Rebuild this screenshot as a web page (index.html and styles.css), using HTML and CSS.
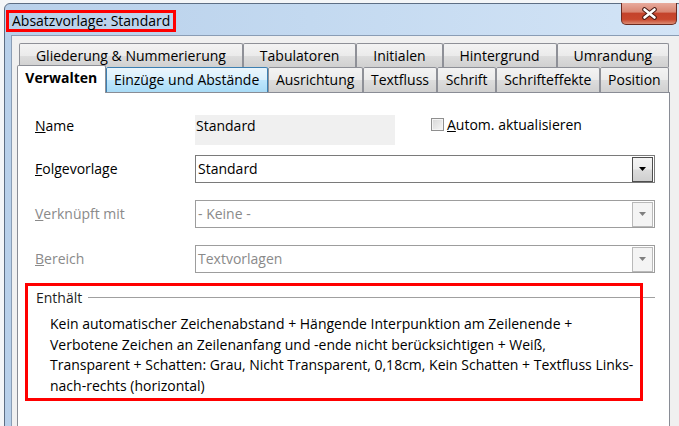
FILE: index.html
```html
<!DOCTYPE html>
<html lang="de">
<head>
<meta charset="utf-8">
<title>Absatzvorlage: Standard</title>
<link rel="stylesheet" href="styles.css">
</head>
<body>
<div class="window">
  <div class="titlebar">
    <div class="title">Absatzvorlage: Standard</div>
    <div class="close">
      <svg width="17" height="13" viewBox="0 0 17 13"><path d="M3.5 2.5 L13.5 10.5 M13.5 2.5 L3.5 10.5" stroke="#4a1a12" stroke-width="4.6" stroke-linecap="round" fill="none"/><path d="M3.5 2.5 L13.5 10.5 M13.5 2.5 L3.5 10.5" stroke="#ffffff" stroke-width="2.6" stroke-linecap="round" fill="none"/></svg>
    </div>
  </div>
  <div class="client">
    <div class="tabs">
      <div class="tabrow back">
        <div class="tab">Gliederung &amp; Nummerierung</div>
        <div class="tab">Tabulatoren</div>
        <div class="tab">Initialen</div>
        <div class="tab">Hintergrund</div>
        <div class="tab">Umrandung</div>
      </div>
      <div class="tabrow front">
        <div class="tab selected">Verwalten</div>
        <div class="tab hover">Einzüge und Abstände</div>
        <div class="tab">Ausrichtung</div>
        <div class="tab">Textfluss</div>
        <div class="tab">Schrift</div>
        <div class="tab">Schrifteffekte</div>
        <div class="tab">Position</div>
      </div>
      <div class="page">
        <div class="row-name">
          <div class="label"><u>N</u>ame</div>
          <div class="namebox">Standard</div>
          <div class="check"><span class="box"></span><span><u>A</u>utom. aktualisieren</span></div>
        </div>
        <div class="row-combo first">
          <div class="label"><u>F</u>olgevorlage</div>
          <div class="combo">
            <span class="val">Standard</span>
            <span class="btn"><svg width="7" height="4" viewBox="0 0 7 4"><path d="M0 0 H7 L3.5 4 Z" fill="#000"/></svg></span>
          </div>
        </div>
        <div class="row-combo disabled">
          <div class="label"><u>V</u>erknüpft mit</div>
          <div class="combo">
            <span class="val">- Keine -</span>
            <span class="btn"><svg width="7" height="4" viewBox="0 0 7 4"><path d="M0 0 H7 L3.5 4 Z" fill="#7f7f7f"/></svg></span>
          </div>
        </div>
        <div class="row-combo disabled">
          <div class="label"><u>B</u>ereich</div>
          <div class="combo">
            <span class="val">Textvorlagen</span>
            <span class="btn"><svg width="7" height="4" viewBox="0 0 7 4"><path d="M0 0 H7 L3.5 4 Z" fill="#7f7f7f"/></svg></span>
          </div>
        </div>
        <div class="section">
          <div class="sec-head"><span class="sec-title">Enthält</span><span class="sec-line"></span></div>
          <p class="sec-text">Kein automatischer Zeichenabstand + Hängende Interpunktion am Zeilenende +<br>Verbotene Zeichen an Zeilenanfang und -ende nicht berücksichtigen + Weiß,<br>Transparent + Schatten: Grau, Nicht Transparent, 0,18cm, Kein Schatten + Textfluss Links-<br>nach-rechts (horizontal)</p>
          <div class="redbox"></div>
        </div>
      </div>
    </div>
  </div>
</div>
</body>
</html>
```

FILE: styles.css
```css
* { box-sizing: border-box; }
html, body { margin: 0; padding: 0; }
body {
  width: 679px;
  height: 426px;
  overflow: hidden;
  background: #f4f6f8;
  font-family: "Open Sans", "Noto Sans", sans-serif;
  font-size: 14px;
  color: #000;
}
.window {
  margin: 3px 0 0 4px;
  width: 680px;
  height: 440px;
  border: 1px solid #5d6e84;
  border-radius: 6px 6px 0 0;
  background: linear-gradient(to right, #b8d0ea 0%, #c3d9f0 45%, #d3e4f6 100%);
  display: flex;
  flex-direction: column;
}
.titlebar {
  height: 31px;
  flex: none;
  display: flex;
  align-items: flex-start;
}
.title {
  margin: 6px 0 0 1px;
  height: 22px;
  border: 3px solid #f00;
  padding: 0 3px;
  line-height: 16px;
  font-size: 14px;
  color: #000;
  white-space: nowrap;
}
.close {
  margin: -1px 6px 0 auto;
  width: 56px;
  height: 22px;
  border: 1px solid #6b2b20;
  border-top: none;
  border-radius: 0 0 5px 5px;
  background: linear-gradient(#e8ab9d 0%, #d98672 42%, #c4432b 50%, #c8472d 78%, #dc8c74 100%);
  display: flex;
  align-items: center;
  justify-content: center;
}
.client {
  margin-left: 6px;
  flex: 1;
  border-left: 1px solid #8a9db5;
  border-top: 1px solid #8a9db5;
  background: #f0f0f0;
  padding: 7px 0 0 5px;
}
.tabs { width: 653px; }
.tabrow { display: flex; }
.tabrow.back { margin: 0 1px 0 2px; height: 24px; }
.tabrow.front { margin-right: 1px; height: 25px; align-items: flex-end; }
.tab {
  flex: 1 1 auto;
  height: 100%;
  padding: 0 4px;
  border: 1px solid #8e9097;
  border-bottom: none;
  border-radius: 2px 2px 0 0;
  background: linear-gradient(#f3f3f3 0%, #ebebeb 50%, #dddddd 51%, #d0d0d0 100%);
  text-align: center;
  white-space: nowrap;
  line-height: 23px;
}
.front .tab { line-height: 24px; }
.tab.hover {
  background: linear-gradient(#eaf6fd 0%, #d9f0fc 50%, #bee6fd 51%, #a9dbf6 100%);
  border-color: #3c7fb1;
}
.tab.selected {
  position: relative;
  z-index: 1;
  height: 28px;
  margin-bottom: -1px;
  background: #fff;
  font-weight: bold;
}
.page {
  width: 653px;
  height: 345px;
  background: #fff;
  border: 1px solid #898c95;
  padding: 22px 14px 0 17px;
}
.label { width: 160px; flex: none; line-height: 20px; white-space: nowrap; }
.row-name { display: flex; align-items: flex-start; height: 30px; }
.row-name .label { padding-top: 1px; }
.namebox {
  width: 200px;
  height: 30px;
  flex: none;
  background: #f0f0f0;
  padding: 1px 0 0 1px;
  line-height: 20px;
}
.check {
  margin: -1px 0 0 36px;
  height: 20px;
  display: flex;
  align-items: center;
  gap: 3px;
  white-space: nowrap;
}
.box {
  width: 13px;
  height: 13px;
  border: 1px solid #8f8f8f;
  background: linear-gradient(135deg, #d6d6d6, #f6f6f6);
  box-shadow: inset 0 0 0 1px #f4f4f4;
}
.row-combo { display: flex; align-items: center; height: 28px; margin-top: 17px; }
.row-combo.first { margin-top: 10px; }
.combo {
  width: 460px;
  height: 28px;
  flex: none;
  border: 1px solid #7a7a7a;
  display: flex;
  align-items: center;
  padding-left: 2px;
}
.combo .val { flex: 1; line-height: 20px; }
.combo .btn {
  width: 21px;
  height: 25px;
  margin-right: 1px;
  border: 1px solid #4e4e4e;
  background: linear-gradient(#f4f4f4 0%, #ececec 48%, #dcdcdc 52%, #cfcfcf 100%);
  display: flex;
  align-items: center;
  justify-content: center;
}
.disabled { color: #8a8a8a; }
.disabled .combo { border-color: #9d9d9d; }
.disabled .combo .btn { border-color: #b9b9b9; background: #f4f4f4; }
.section { position: relative; margin-top: 15px; }
.sec-head { display: flex; align-items: center; height: 20px; }
.sec-title { padding-left: 1px; line-height: 20px; color: #1e1e1e; }
.sec-line { flex: 1; margin: -2px 0 0 6px; border-top: 1px solid #a0a0a0; }
.sec-text {
  margin: 6px 0 0 15px;
  line-height: 20.7px;
  white-space: nowrap;
}
.redbox {
  position: absolute;
  left: -10px;
  top: -5px;
  width: 618px;
  height: 118px;
  border: 3px solid #f00;
  pointer-events: none;
}
```
